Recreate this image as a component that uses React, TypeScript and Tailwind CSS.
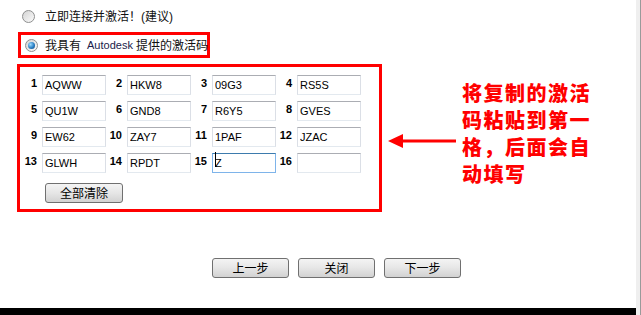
const codes = [
  'AQWW', 'HKW8', '09G3', 'RS5S',
  'QU1W', 'GND8', 'R6Y5', 'GVES',
  'EW62', 'ZAY7', '1PAF', 'JZAC',
  'GLWH', 'RPDT', 'Z', '',
]

const cjk = { fontFamily: '"Noto Sans CJK SC", "Liberation Sans", sans-serif' }
const latin = { fontFamily: '"Liberation Sans", Arial, sans-serif' }

function Radio({ checked }: { checked?: boolean }) {
  return (
    <span className="flex h-[13px] w-[13px] shrink-0 items-center justify-center rounded-full border border-[#8e8f8f] bg-gradient-to-br from-[#d4d4d4] to-[#fbfbfb]">
      {checked && (
        <span className="h-[7px] w-[7px] rounded-full bg-[radial-gradient(circle_at_35%_35%,#9fdcff,#2a7fc4_55%,#0b3f73)]" />
      )}
    </span>
  )
}

function WinButton({ label, className = '' }: { label: string; className?: string }) {
  return (
    <button
      className={`flex h-[20px] w-[77px] items-center justify-center rounded-[3px] border border-[#707070] bg-gradient-to-b from-[#f4f4f4] via-[#e6e6e6] to-[#d2d2d2] text-[12px] leading-none text-black ${className}`}
      style={cjk}>
      {label}
    </button>
  )
}

export default function App() {
  return (
    <div className="flex h-[315px] w-[641px] overflow-hidden bg-white">
      <div className="flex w-[636px] flex-col">
        <div className="h-[308px] pt-[10px]">

          <div className="flex h-[13px] items-center pl-[22px]">
            <Radio />
            <span className="ml-[10px] whitespace-nowrap text-[12px] leading-none text-[#111]" style={cjk}>
              立即连接并激活！<span style={latin}>(</span>建议<span style={latin}>)</span>
            </span>
          </div>

          <div className="ml-[18px] mt-[9px] flex h-[26px] w-[192px] items-center overflow-visible border-[3px] border-[#ff0000] pl-[4px]">
            <Radio checked />
            <span className="ml-[7px] flex shrink-0 items-center whitespace-nowrap text-[12px] leading-none text-[#111]" style={cjk}>
              我具有
              <span className="ml-[6px] mr-[3px] text-[11px] text-[#1c1c4a]" style={latin}>Autodesk</span>
              提供的激活码
            </span>
          </div>

          <div className="mt-[6px] flex items-start">
            <div className="ml-[17px] flex h-[148px] w-[365px] flex-col border-[3px] border-[#ff0000] pl-[1px] pt-[6px]">
              <div className="grid grid-cols-[85px_85px_85px_85px] gap-y-[6px]">
                {codes.map((c, i) => (
                  <div key={i} className="flex h-[20px] items-center">
                    <span className="w-[21px] pr-[5px] text-right text-[11px] font-bold leading-none text-black" style={latin}>
                      {i + 1}
                    </span>
                    <div className="relative">
                      <input
                        readOnly
                        value={c}
                        className={`h-[20px] w-[64px] border px-[2px] text-[11px] text-black outline-none ${
                          i === 14
                            ? 'border-[#7eb4ea] border-t-[#3d7bad]'
                            : 'border-[#dbdfe6] border-t-[#abadb3] border-b-[#e3e9ef]'
                        }`}
                        style={latin}
                      />
                      {i === 14 && <span className="absolute left-[3px] top-[3px] h-[15px] w-[1px] bg-black" />}
                    </div>
                  </div>
                ))}
              </div>
              <WinButton label="全部清除" className="ml-[24px] mt-[12px] w-[78px]" />
            </div>

            <div className="flex items-start">
              <svg width="70" height="14" viewBox="0 0 70 14" className="ml-[5px] mt-[70px]">
                <polygon points="1,7 16,0 16,14" fill="#ff0000" />
                <rect x="14" y="5.5" width="55" height="3" fill="#ff0000" />
              </svg>
              <div
                className="ml-[5px] mt-[15px] flex flex-col text-[20px] font-black leading-[27px] tracking-[1.5px] text-[#ff0000]"
                style={cjk}>
                <span>将复制的激活</span>
                <span>码粘贴到第一</span>
                <span>格，后面会自</span>
                <span>动填写</span>
              </div>
            </div>
          </div>

          <div className="ml-[212px] mt-[46px] flex gap-[9px]">
            <WinButton label="上一步" />
            <WinButton label="关闭" />
            <WinButton label="下一步" />
          </div>
        </div>
        <div className="h-[7px] bg-black" />
      </div>
      <div className="w-[4px] bg-[#efefef]" />
      <div className="w-[1px] bg-[#9a9a9a]" />
    </div>
  )
}
